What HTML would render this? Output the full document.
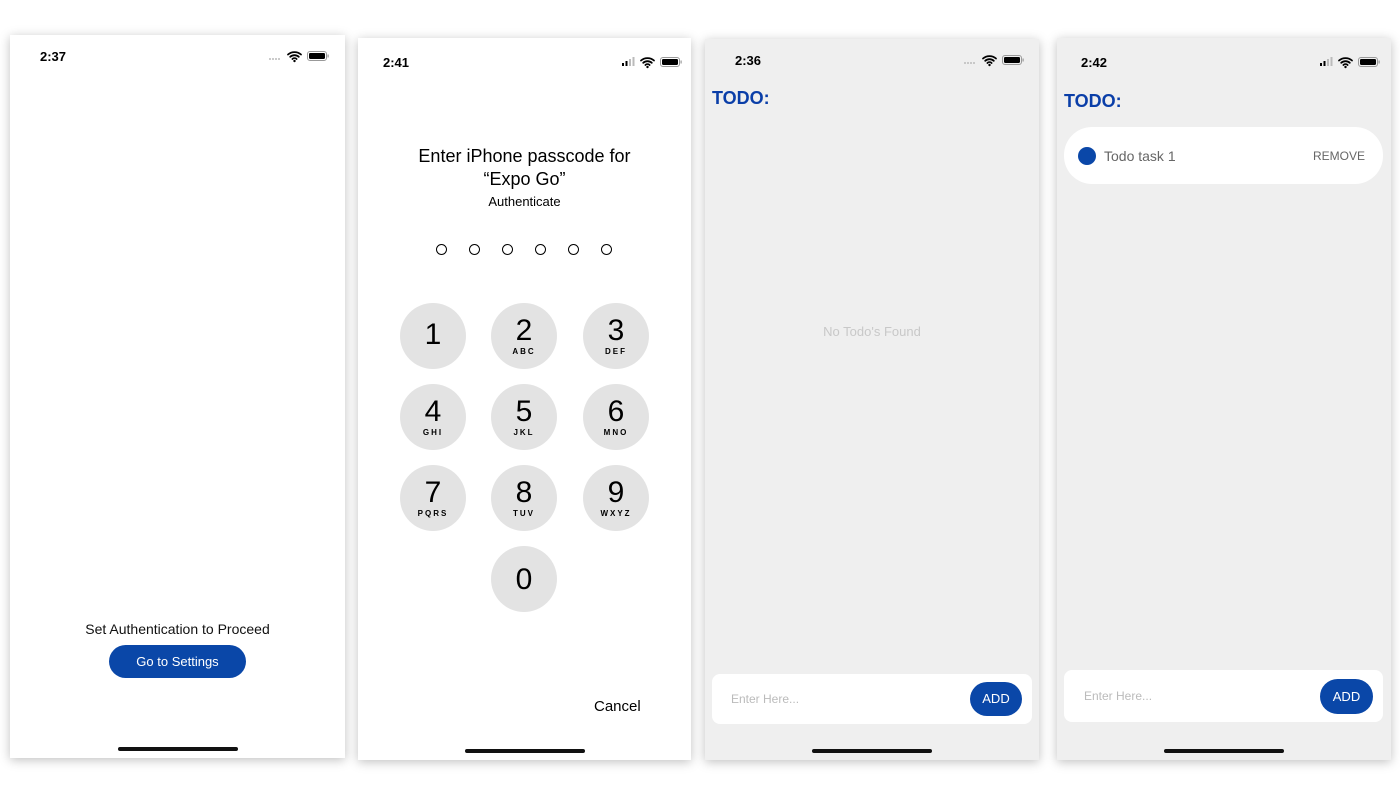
<!DOCTYPE html>
<html><head><style>
*{margin:0;padding:0;box-sizing:border-box}
body{width:1400px;height:800px;background:#fff;position:relative;overflow:hidden;font-family:"Liberation Sans",Arial,sans-serif}
.ph{position:absolute;box-shadow:0 2px 10px rgba(0,0,0,.25)}
.a{position:absolute}
.time{position:absolute;font-size:13px;font-weight:bold;color:#000}
.home{position:absolute;height:4px;width:120px;background:#111;border-radius:3px}
.key{position:absolute;width:66px;height:66px;border-radius:50%;background:#e3e3e3;text-align:center;color:#000}
.key b{display:block;font-weight:normal;font-size:30px;line-height:30px;margin-top:13px}
.key i{display:block;font-style:normal;font-weight:bold;font-size:8px;letter-spacing:2px;margin-top:1px}
.dot{position:absolute;width:11px;height:11px;border:1.3px solid #000;border-radius:50%}
.btn{position:absolute;background:#0a47a8;color:#fff;border-radius:18px;text-align:center;font-size:13px}
.todo{position:absolute;color:#0a3ea8;font-weight:bold;font-size:18px}
.inp{position:absolute;background:#fff;border-radius:8px}
</style></head><body>

<svg width="0" height="0" style="position:absolute"><defs>
<g id="wifi"><path d="M1 4.5a10 10 0 0 1 13 0M3.2 6.8a6.5 6.5 0 0 1 8.6 0M5.4 9a3 3 0 0 1 4.2 0" stroke="#000" stroke-width="1.8" fill="none" stroke-linecap="round"/><circle cx="7.5" cy="11" r="1.2"/></g>
<g id="bat"><rect x="0.5" y="0.5" width="19" height="9" rx="2.5" fill="none" stroke="#999"/><rect x="2" y="2" width="16" height="6" rx="1.2"/><rect x="20.5" y="3.5" width="1.2" height="3" fill="#999"/></g>
</defs></svg>

<!-- phone 1 -->
<div class="ph" style="left:10px;top:35px;width:335px;height:723px;background:#fff">
<div class="time" style="left:30px;top:14px">2:37</div>
<svg class="a" style="left:258px;top:15px" width="62" height="14"><g fill="#bbb"><circle cx="2" cy="9" r="1"/><circle cx="5" cy="9" r="1"/><circle cx="8" cy="9" r="1"/><circle cx="11" cy="9" r="1"/></g><use href="#wifi" x="19" y="0"/><use href="#bat" x="39" y="1"/></svg>
<div class="a" style="left:0;width:335px;top:586px;text-align:center;font-size:14px;color:#111">Set Authentication to Proceed</div>
<div class="btn" style="left:99px;top:610px;width:137px;height:33px;line-height:33px">Go to Settings</div>
<div class="home" style="left:108px;top:712px"></div>
</div>

<!-- phone 2 -->
<div class="ph" style="left:358px;top:38px;width:333px;height:722px;background:#fff">
<div class="time" style="left:25px;top:17px">2:41</div>
<svg class="a" style="left:263px;top:18px" width="62" height="14"><g><rect x="1" y="7" width="2" height="3"/><rect x="4.5" y="5" width="2" height="5"/><rect x="8" y="3" width="2" height="7" fill="#bbb"/><rect x="11.5" y="1" width="2" height="9" fill="#bbb"/></g><use href="#wifi" x="19" y="0"/><use href="#bat" x="39" y="1"/></svg>
<div class="a" style="left:0;width:333px;top:107px;text-align:center;font-size:18px;line-height:23px;color:#000">Enter iPhone passcode for<br>“Expo Go”</div>
<div class="a" style="left:0;width:333px;top:156px;text-align:center;font-size:13px;color:#000">Authenticate</div>
<div class="dot" style="left:78px;top:206px"></div><div class="dot" style="left:111px;top:206px"></div><div class="dot" style="left:144px;top:206px"></div><div class="dot" style="left:177px;top:206px"></div><div class="dot" style="left:210px;top:206px"></div><div class="dot" style="left:243px;top:206px"></div>
<div class="key" style="left:42px;top:265px"><b style="margin-top:17px">1</b></div>
<div class="key" style="left:133px;top:265px"><b>2</b><i>ABC</i></div>
<div class="key" style="left:225px;top:265px"><b>3</b><i>DEF</i></div>
<div class="key" style="left:42px;top:346px"><b>4</b><i>GHI</i></div>
<div class="key" style="left:133px;top:346px"><b>5</b><i>JKL</i></div>
<div class="key" style="left:225px;top:346px"><b>6</b><i>MNO</i></div>
<div class="key" style="left:42px;top:427px"><b>7</b><i>PQRS</i></div>
<div class="key" style="left:133px;top:427px"><b>8</b><i>TUV</i></div>
<div class="key" style="left:225px;top:427px"><b>9</b><i>WXYZ</i></div>
<div class="key" style="left:133px;top:508px"><b style="margin-top:19px">0</b></div>
<div class="a" style="left:236px;top:660px;font-size:15px;color:#000">Cancel</div>
<div class="home" style="left:107px;top:711px"></div>
</div>

<!-- phone 3 -->
<div class="ph" style="left:705px;top:39px;width:334px;height:721px;background:#efefef">
<div class="time" style="left:30px;top:14px">2:36</div>
<svg class="a" style="left:258px;top:15px" width="62" height="14"><g fill="#bbb"><circle cx="2" cy="9" r="1"/><circle cx="5" cy="9" r="1"/><circle cx="8" cy="9" r="1"/><circle cx="11" cy="9" r="1"/></g><use href="#wifi" x="19" y="0"/><use href="#bat" x="39" y="1"/></svg>
<div class="todo" style="left:7px;top:49px">TODO:</div>
<div class="a" style="left:0;width:334px;top:285px;text-align:center;font-size:13px;color:#c8c8c8">No Todo's Found</div>
<div class="inp" style="left:7px;top:635px;width:320px;height:50px"></div>
<div class="a" style="left:26px;top:653px;font-size:12px;color:#bbb">Enter Here...</div>
<div class="btn" style="left:265px;top:643px;width:52px;height:34px;line-height:34px">ADD</div>
<div class="home" style="left:107px;top:710px"></div>
</div>

<!-- phone 4 -->
<div class="ph" style="left:1057px;top:38px;width:334px;height:722px;background:#efefef">
<div class="time" style="left:24px;top:17px">2:42</div>
<svg class="a" style="left:262px;top:18px" width="62" height="14"><g><rect x="1" y="7" width="2" height="3"/><rect x="4.5" y="5" width="2" height="5"/><rect x="8" y="3" width="2" height="7" fill="#bbb"/><rect x="11.5" y="1" width="2" height="9" fill="#bbb"/></g><use href="#wifi" x="19" y="0"/><use href="#bat" x="39" y="1"/></svg>
<div class="todo" style="left:7px;top:53px">TODO:</div>
<div class="a" style="left:7px;top:89px;width:319px;height:57px;background:#fff;border-radius:28px"></div>
<div class="a" style="left:21px;top:109px;width:18px;height:18px;border-radius:50%;background:#0a47a8"></div>
<div class="a" style="left:47px;top:110px;font-size:14px;color:#666">Todo task 1</div>
<div class="a" style="left:256px;top:111px;font-size:12px;color:#666">REMOVE</div>
<div class="inp" style="left:7px;top:632px;width:319px;height:52px"></div>
<div class="a" style="left:27px;top:651px;font-size:12px;color:#bbb">Enter Here...</div>
<div class="btn" style="left:263px;top:641px;width:53px;height:35px;line-height:35px">ADD</div>
<div class="home" style="left:107px;top:711px"></div>
</div>
</body></html>
